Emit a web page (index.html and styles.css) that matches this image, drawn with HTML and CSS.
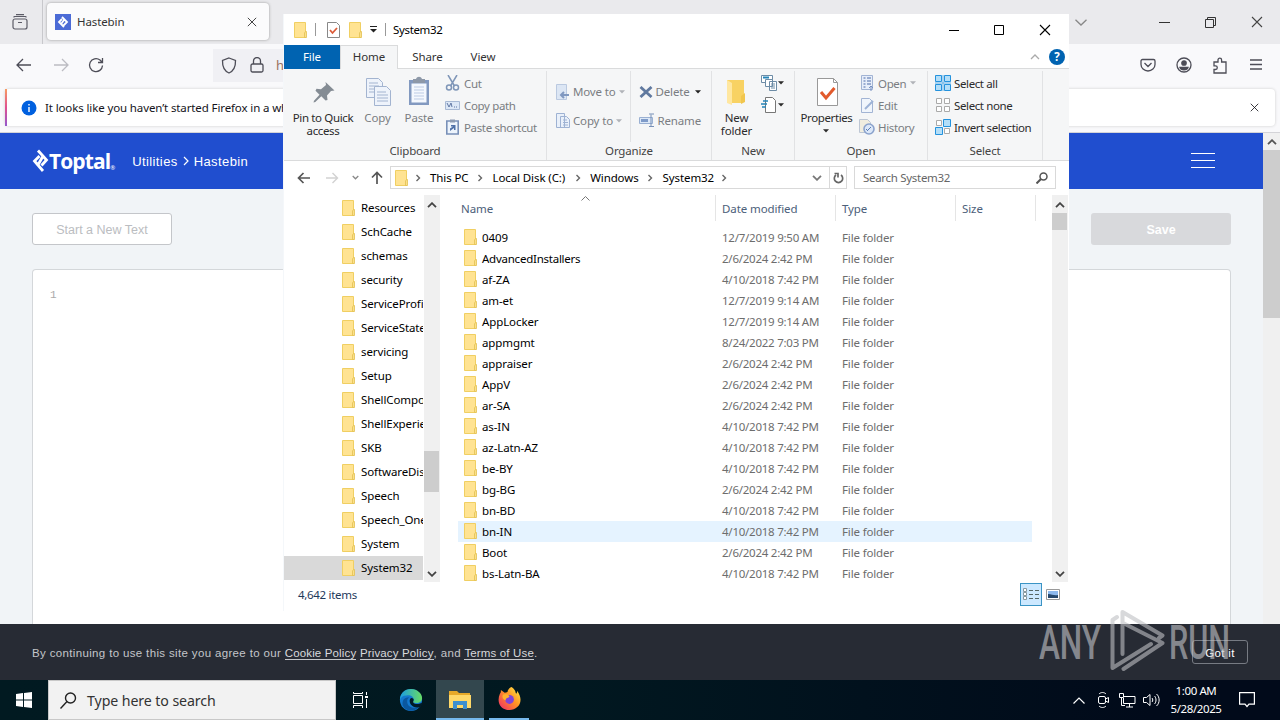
FILE: index.html
```html
<!DOCTYPE html>
<html lang="en">
<head>
<meta charset="utf-8">
<title>Desktop</title>
<link rel="stylesheet" href="styles.css">
</head>
<body>
<svg class="defs" width="0" height="0">
  <symbol id="folder" viewBox="0 0 13 16"><path d="M.5.5h11v15H.5z" fill="#ffe392" stroke="#f0cf62"/><path d="M10.500 15.500V11l1-1.500h1v6z" fill="#fbe08a" stroke="#e2c052" stroke-width=".8"/></symbol>
  <symbol id="x" viewBox="0 0 12 12"><path d="M1 1l10 10M11 1L1 11" fill="none" stroke="currentColor" stroke-width="1.100"/></symbol>
  <symbol id="up" viewBox="0 0 10 6"><path d="M1 5.200l4-4 4 4" fill="none" stroke="currentColor" stroke-width="1.800"/></symbol>
  <symbol id="down" viewBox="0 0 10 6"><path d="M1 .8l4 4 4-4" fill="none" stroke="currentColor" stroke-width="1.800"/></symbol>
  <symbol id="right" viewBox="0 0 6 8"><path d="M1.500 1l3 3-3 3" fill="none" stroke="#666" stroke-width="1.400"/></symbol>
  <symbol id="tri" viewBox="0 0 6 4"><path d="M0 .3h6L3 3.500z" fill="currentColor"/></symbol>
</svg>
<div class="screen">
  <div class="browser">
    <div class="tabbar">
      <div class="view"><svg width="16" height="16" viewBox="0 0 16 16" fill="none" stroke="#5b5b66" stroke-width="1.200"><rect x="1" y="5" width="14" height="10" rx="2"/><path d="M1.500 3.300l1-.8h11l1 .8M4 .7h8M6 8.500h4"/></svg></div>
      <div class="tab">
        <svg width="16" height="16" viewBox="0 0 16 16"><path d="M0 0h16v16H0z" fill="#4b6bd6"/><path d="M7 3l5 5-4 4M9 13L4 8l3-3M9 6L6.500 9.500" fill="none" stroke="#fff" stroke-width="1.800"/></svg>
        <span class="tab-name">Hastebin</span>
        <svg class="tab-x" width="10" height="10"><use href="#x"/></svg>
      </div>
      <div class="browser-ctl">
        <svg width="12" height="7" viewBox="0 0 12 7" fill="none" stroke="#888" stroke-width="1.300"><path d="M.5.800L6 6l5.500-5.200"/></svg>
        <svg width="11" height="11"><path d="M0 5.500h11" stroke="#333"/></svg>
        <svg width="11" height="11" fill="none" stroke="#333"><path d="M.5 2.500h8v8h-8zM2.500 2.500v-2h8v8h-2"/></svg>
        <svg width="12" height="12"><use href="#x"/></svg>
      </div>
    </div>
    <div class="toolbar">
      <svg width="16" height="14" viewBox="0 0 16 14" fill="none" stroke="#4d4d57" stroke-width="1.300"><path d="M15 7H1.500M7 1L1 7l6 6"/></svg>
      <svg class="fwd" width="16" height="14" viewBox="0 0 16 14" fill="none" stroke="#bcbcc2" stroke-width="1.300"><path d="M1 7h13.500M9 1l6 6-6 6"/></svg>
      <svg class="reload" width="16" height="16" viewBox="0 0 16 16" fill="none" stroke="#4d4d57" stroke-width="1.300"><path d="M14.500 8.500A6.500 6.500 0 1 1 12 3l2 2M14.500 1v4.500H10"/></svg>
      <div class="url">
        <svg width="16" height="17" viewBox="0 0 16 17" fill="none" stroke="#4d4d57" stroke-width="1.300"><path d="M8 1l6.500 2.500c.2 6-2 10.500-6.500 12.500C3.500 14 1.300 9.500 1.500 3.500z"/></svg>
        <svg width="14" height="16" viewBox="0 0 14 16" fill="none" stroke="#4d4d57" stroke-width="1.300"><rect x="1" y="7" width="12" height="8" rx="1.500"/><path d="M3.500 7V4a3.500 3.500 0 0 1 7 0v3"/></svg>
        <span>h</span>
      </div>
      <div class="tools">
        <svg width="16" height="16" viewBox="0 0 16 16" fill="none" stroke="#4d4d57" stroke-width="1.300"><path d="M2.500 2.500h11a1.500 1.500 0 0 1 1.500 1.500v3.500a7 6.500 0 0 1-14 0V4a1.500 1.500 0 0 1 1.500-1.500zM4.500 6L8 9.500 11.500 6"/></svg>
        <svg width="16" height="16" viewBox="0 0 16 16" fill="none" stroke="#4d4d57" stroke-width="1.300"><circle cx="8" cy="8" r="7"/><circle cx="8" cy="6" r="2.200" fill="#4d4d57"/><path d="M4 10.500h8c-1 3-7 3-8 0z" fill="#4d4d57"/></svg>
        <svg width="16" height="17" viewBox="0 0 16 17" fill="none" stroke="#4d4d57" stroke-width="1.300"><path d="M2 5h4V3a1.800 1.800 0 0 1 3.600 0v2H14v11H2v-3.500h1.500a1.800 1.800 0 0 0 0-3.600H2z"/></svg>
        <svg width="12" height="12" stroke="#4d4d57" stroke-width="1.300"><path d="M0 1h12M0 5.500h12M0 10h12"/></svg>
      </div>
    </div>
    <div class="notice-wrap"><div class="notice">
      <svg width="16" height="16"><circle cx="8" cy="8" r="7.500" fill="#0060df"/><path d="M8 7v5M8 4v1.500" stroke="#fff" stroke-width="1.400"/></svg>
      <span>It looks like you haven’t started Firefox in a while.</span>
      <svg class="notice-x" width="9" height="9"><use href="#x"/></svg>
    </div></div>
    <div class="page-row">
      <div class="page">
        <div class="site-head">
          <svg width="17" height="24" viewBox="0 0 16 24" fill="none" stroke="#fff" stroke-width="2.800"><path d="M5.500 1.500L14 11l-5 5.500M10.500 22L2 12l5-5M10 8l-4 7"/></svg>
          <span class="brand">Toptal</span><span class="reg">®</span>
          <span class="crumb">Utilities</span>
          <svg class="crumb-sep" width="6" height="10" fill="none" stroke="#fff" stroke-width="1.200"><path d="M1 1l4 4-4 4"/></svg>
          <span class="crumb">Hastebin</span>
          <svg class="burger" width="24" height="16" stroke="#fff"><path d="M0 .5h24M0 7.500h24M0 14.500h24"/></svg>
        </div>
        <div class="actions"><span class="btn-new">Start a New Text</span><span class="btn-save">Save</span></div>
        <div class="editor">1</div>
      </div>
      <div class="scroll">
        <div class="scroll-btn"><svg width="10" height="6"><use href="#up"/></svg></div>
        <div class="scroll-thumb"></div>
      </div>
    </div>
    <div class="cookie">
      <span class="cookie-text">By continuing to use this site you agree to our <u>Cookie Policy</u> <u>Privacy Policy</u>, and <u>Terms of Use</u>.</span>
      <span class="got">Got it</span>
    </div>
  </div>

  <div class="explorer">
    <div class="titlebar">
      <svg width="13" height="16"><use href="#folder"/></svg><i class="bar"></i>
      <svg class="q2" width="13" height="16" viewBox="0 0 13 16"><path d="M.5.5h9l3 3v12H.5z" fill="#fff" stroke="#888"/><path d="M3 8l2.500 3 4.500-5" fill="none" stroke="#dc5b38" stroke-width="1.800"/></svg>
      <svg class="q3" width="13" height="16"><use href="#folder"/></svg>
      <svg class="q4" width="7" height="7"><path d="M0 .5h7" stroke="#222"/><path d="M0 3h7L3.500 6.500z" fill="#222"/></svg><i class="bar b2"></i>
      <span class="wtitle">System32</span>
      <div class="wctl">
        <svg width="10" height="10"><path d="M0 5.500h10" stroke="#000"/></svg>
        <svg width="10" height="10" fill="none" stroke="#000"><path d="M.5.5h9v9h-9z"/></svg>
        <svg width="12" height="12"><use href="#x"/></svg>
      </div>
    </div>
    <div class="tabs">
      <span class="t-file">File</span><span class="t-home">Home</span><span class="t-share">Share</span><span class="t-view">View</span>
      <svg class="collapse" width="10" height="6" fill="none" stroke="#aaa" stroke-width="1.300"><path d="M1 5l4-4 4 4"/></svg>
      <span class="help">?</span>
    </div>
    <div class="ribbon">
      <div class="grp g-clip"><div class="body">
        <div class="big pin"><svg width="30" height="34" viewBox="0 0 30 34"><path d="M17.500 7l9 8.500-3.500.5-4 4.500.5 4.500-2 .5-4.200-4.200-6 5.700-1.800.5.500-1.800 5.500-6-4-4 1-2 4.500.5 5-4.200z" fill="#848c94"/></svg><span>Pin to Quick<br>access</span></div>
        <div class="big copy dim"><svg width="30" height="34" viewBox="0 0 30 34" fill="#eef3fb" stroke="#a3b4d0"><path d="M3.500 3.500h12l4 4v15h-16z"/><path d="M6 8h9M6 11h10M6 14h8M6 17h8"/><path d="M11.500 11.500h12l4 4v15h-16z"/><path d="M14 17h9M14 20h11M14 23h11M14 26h11"/></svg><span>Copy</span></div>
        <div class="big paste dim"><svg width="30" height="34" viewBox="0 0 30 34"><path d="M5 5h20v25H5z" fill="#8299c0"/><path d="M7.500 8.500h15v19h-15z" fill="#f4f8fe"/><path d="M10 12h10M10 15h10M10 18h10M10 21h10M10 24h10" stroke="#bccbe4"/><path d="M9 4h3c1-3 5-3 6 0h3v4H9z" fill="#8d98a8"/></svg><span>Paste</span></div>
        <div class="small dim">
          <span class="cmd"><svg width="15" height="16" viewBox="0 0 15 16" fill="none" stroke="#7f96b8" stroke-width="1.500"><path d="M3 0l6.500 11M12 0L5.500 11"/><circle cx="4" cy="12.500" r="2.500"/><circle cx="11" cy="12.500" r="2.500"/></svg>Cut</span>
          <span class="cmd"><svg width="15" height="10"><path d="M.5 1.500h14v8H.5z" fill="#dce7f6" stroke="#a8b9d4"/><path d="M2 3l2 4 2-4 1 4M9 7h1M11 7h1" fill="none" stroke="#6077a4"/></svg>Copy path</span>
          <span class="cmd"><svg width="15" height="16" viewBox="0 0 15 16"><path d="M1.800 2h11.400v13H1.800z" fill="#edf4fc" stroke="#7890b8" stroke-width="1.600"/><path d="M5 .5h5v3H5z" fill="#8c9bb2"/><path d="M5 12V9.500L8 7.500H6V6h4.500v5H9V9z" fill="#4f71a8"/></svg>Paste shortcut</span>
        </div></div><div class="label">Clipboard</div></div>
      <div class="grp g-org"><div class="body">
        <div class="duo dim"><span class="cmd"><svg width="14" height="16"><path d="M.5.5h10v15H.5z" fill="#dce6f4" stroke="#bac9e0"/><path d="M13 11H5M8 8l-3 3 3 3" stroke="#8098c0" fill="none" stroke-width="2"/></svg>Move to<svg class="dt" width="6" height="4"><use href="#tri"/></svg></span>
        <span class="cmd"><svg width="14" height="16" fill="#e9f0fa" stroke="#9eb2d3"><path d="M.5.500h8v14h-8zM4.500 3.500h6l3 3v8h-9zM7 7h4M7 9.500h5M7 12h5"/></svg>Copy to<svg class="dt" width="6" height="4"><use href="#tri"/></svg></span></div>
        <div class="duo d2 dim"><span class="cmd"><svg width="14" height="12"><path d="M1.500 1l11 10M12.500 1l-11 10" stroke="#60799f" stroke-width="2.800"/></svg>Delete<svg class="dt dark" width="6" height="4"><use href="#tri"/></svg></span>
        <span class="cmd"><svg width="16" height="15"><path d="M.5 4.500h13v6H.5z" fill="#dce8f7" stroke="#9ab0d2"/><path d="M2 6h7v3H2z" fill="#7f9bc9"/><path d="M12 1.500V13M10 1h5M10 13.500h5" stroke="#7790b8"/></svg>Rename</span></div>
      </div><div class="label">Organize</div></div>
      <div class="grp g-new"><div class="body">
        <div class="big newf"><svg width="30" height="34" viewBox="0 0 30 34"><path d="M5 5h17v21l-3 2L5 28z" fill="#f8d263"/><path d="M5 5l5 3v22l-5-2z" fill="#ffe7a0"/><path d="M19 21l4-3v9l-4 2z" fill="#f1c64e"/></svg><span>New<br>folder</span></div>
        <div class="mini"><span><svg width="16" height="16" fill="#fff" stroke="#6d8ca6"><path d="M.5.5h11v7H.500z"/><path d="M2 2.500h6" stroke="#2484b8" stroke-width="2"/><path d="M4.500 4.500h7v7h-7zM8.500 6.500h7v9h-7zM10 9h4M10 11h4M10 13h4"/></svg><svg width="6" height="4"><use href="#tri"/></svg></span>
        <span><svg width="16" height="16"><path d="M4.500.5h7l3 3v12h-10z" fill="#fff" stroke="#777"/><path d="M0 7h6M2 4h5M1 10h4" stroke="#2484b8" stroke-width="1.300"/></svg><svg width="6" height="4"><use href="#tri"/></svg></span></div>
      </div><div class="label">New</div></div>
      <div class="grp g-open"><div class="body">
        <div class="big prop"><svg width="30" height="34" viewBox="0 0 30 34"><path d="M5.500 3.500h16l4 4v23h-20z" fill="#fff" stroke="#999"/><path d="M21.500 3.500v4h4" fill="none" stroke="#999"/><path d="M9 17l5 6 8.500-10" fill="none" stroke="#e25a2c" stroke-width="3"/></svg><span>Properties<br><svg width="6" height="4"><use href="#tri"/></svg></span></div>
        <div class="small dim">
          <span class="cmd"><svg width="13" height="16"><path d="M.5.5h11v14H.5z" fill="#e7eefa" stroke="#a2b4d4"/><path d="M2.500 3h2M6 3h4M2.500 6h2M6 6h4M2.500 9h2M6 9h4M2.500 12h2" stroke="#8198c4" stroke-width="1.400"/><path d="M10 16v-5M8 13l2-2 2 2" stroke="#7790c0" fill="none"/></svg>Open<svg class="dt" width="6" height="4"><use href="#tri"/></svg></span>
          <span class="cmd"><svg width="13" height="15"><path d="M.5.5h8l3 3v11H.5z" fill="#f0f5fc" stroke="#a2b4d4"/><path d="M4 11l8-8" stroke="#9db2d6" stroke-width="2"/></svg>Edit</span>
          <span class="cmd hist"><svg width="16" height="16"><path d="M.5.5h8l3 3v10H.5z" fill="#f0eddf" stroke="#bdc6d4"/><circle cx="10" cy="10" r="5" fill="#dbe7f8" stroke="#8ba3cd" stroke-width="1.600"/><path d="M9 11l3-3M7 10l2 2" stroke="#5c7eb5"/></svg>History</span>
        </div></div><div class="label">Open</div></div>
      <div class="grp g-sel"><div class="body"><div class="small">
        <span class="cmd"><svg width="16" height="16"><path d="M.5.5h6v6h-6zM9.500.5h6v6h-6zM.5 9.500h6v6h-6zM9.500 9.500h6v6h-6z" fill="#b3def8" stroke="#2492dd"/><path d="M8 0v16M0 8h16" stroke="#5fb0e8"/></svg>Select all</span>
        <span class="cmd"><svg width="16" height="16" fill="#fff" stroke="#aaa"><path d="M1.500 1.500h5v5h-5zM9.500 1.500h5v5h-5zM1.500 9.500h5v5h-5zM9.500 9.500h5v5h-5z"/></svg>Select none</span>
        <span class="cmd"><svg width="16" height="16"><path d="M1.500 1.500h5v5h-5zM9.500 9.500h5v5h-5z" fill="#fff" stroke="#aaa"/><path d="M8.500.5h7v7h-7zM.5 8.500h7v7h-7z" fill="#b3def8" stroke="#2492dd"/></svg>Invert selection</span>
      </div></div><div class="label">Select</div></div>
    </div>
    <div class="address">
      <svg width="13" height="12" viewBox="0 0 13 12" fill="none" stroke="#555" stroke-width="1.700"><path d="M13 6H1.500M6.500 1l-5 5 5 5"/></svg>
      <svg class="a2" width="13" height="12" viewBox="0 0 13 12" fill="none" stroke="#d2d2d2" stroke-width="1.400"><path d="M0 6h11.500M6.500 1l5 5-5 5"/></svg>
      <svg class="a3 grey" width="7" height="5"><use href="#down"/></svg>
      <svg class="a4" width="12" height="13" viewBox="0 0 12 13" fill="none" stroke="#555" stroke-width="1.700"><path d="M6 13V2M1 6.500l5-5 5 5"/></svg>
      <div class="path">
        <svg width="13" height="16"><use href="#folder"/></svg>
        <svg class="s1" width="6" height="8"><use href="#right"/></svg><span class="p1">This PC</span>
        <svg width="6" height="8"><use href="#right"/></svg><span class="p2">Local Disk (C:)</span>
        <svg width="6" height="8"><use href="#right"/></svg><span class="p3">Windows</span>
        <svg width="6" height="8"><use href="#right"/></svg><span class="p4">System32</span>
        <svg width="6" height="8"><use href="#right"/></svg>
        <svg class="pd" width="10" height="6"><use href="#down"/></svg>
        <div class="refresh"><svg width="11" height="12" viewBox="0 0 11 12" fill="none" stroke="#666" stroke-width="1.700"><path d="M8 3a4.200 4.200 0 1 1-5 0M1.500 1.500h3.500v4"/></svg></div>
      </div>
      <div class="find"><span>Search System32</span><svg width="12" height="12" fill="none" stroke="#555" stroke-width="1.500"><circle cx="7.500" cy="4.500" r="3.500"/><path d="M5 7L.5 11.500" stroke-width="2"/></svg></div>
    </div>
    <div class="content">
      <div class="tree">
        <div><svg><use href="#folder"/></svg>Resources</div><div><svg><use href="#folder"/></svg>SchCache</div><div><svg><use href="#folder"/></svg>schemas</div><div><svg><use href="#folder"/></svg>security</div><div><svg><use href="#folder"/></svg>ServiceProfiles</div><div><svg><use href="#folder"/></svg>ServiceState</div><div><svg><use href="#folder"/></svg>servicing</div><div><svg><use href="#folder"/></svg>Setup</div><div><svg><use href="#folder"/></svg>ShellComponents</div><div><svg><use href="#folder"/></svg>ShellExperiences</div><div><svg><use href="#folder"/></svg>SKB</div><div><svg><use href="#folder"/></svg>SoftwareDistribution</div><div><svg><use href="#folder"/></svg>Speech</div><div><svg><use href="#folder"/></svg>Speech_OneCore</div><div><svg><use href="#folder"/></svg>System</div><div class="sel"><svg><use href="#folder"/></svg>System32</div>
      </div>
      <div class="sb sb-tree"><svg width="10" height="6"><use href="#up"/></svg><div class="thumb"></div><svg class="end" width="10" height="6"><use href="#down"/></svg></div>
      <div class="files">
        <div class="cols"><span>Name<svg class="sort" width="9" height="5" fill="none" stroke="#777"><path d="M.5 4.500l4-4 4 4"/></svg></span><span>Date modified</span><span>Type</span><span>Size</span></div>
        <div class="row"><b><svg><use href="#folder"/></svg>0409</b><span>12/7/2019 9:50 AM</span><span>File folder</span></div>
        <div class="row"><b><svg><use href="#folder"/></svg>AdvancedInstallers</b><span>2/6/2024 2:42 PM</span><span>File folder</span></div>
        <div class="row"><b><svg><use href="#folder"/></svg>af-ZA</b><span>4/10/2018 7:42 PM</span><span>File folder</span></div>
        <div class="row"><b><svg><use href="#folder"/></svg>am-et</b><span>12/7/2019 9:14 AM</span><span>File folder</span></div>
        <div class="row"><b><svg><use href="#folder"/></svg>AppLocker</b><span>12/7/2019 9:14 AM</span><span>File folder</span></div>
        <div class="row"><b><svg><use href="#folder"/></svg>appmgmt</b><span>8/24/2022 7:03 PM</span><span>File folder</span></div>
        <div class="row"><b><svg><use href="#folder"/></svg>appraiser</b><span>2/6/2024 2:42 PM</span><span>File folder</span></div>
        <div class="row"><b><svg><use href="#folder"/></svg>AppV</b><span>2/6/2024 2:42 PM</span><span>File folder</span></div>
        <div class="row"><b><svg><use href="#folder"/></svg>ar-SA</b><span>2/6/2024 2:42 PM</span><span>File folder</span></div>
        <div class="row"><b><svg><use href="#folder"/></svg>as-IN</b><span>4/10/2018 7:42 PM</span><span>File folder</span></div>
        <div class="row"><b><svg><use href="#folder"/></svg>az-Latn-AZ</b><span>4/10/2018 7:42 PM</span><span>File folder</span></div>
        <div class="row"><b><svg><use href="#folder"/></svg>be-BY</b><span>4/10/2018 7:42 PM</span><span>File folder</span></div>
        <div class="row"><b><svg><use href="#folder"/></svg>bg-BG</b><span>2/6/2024 2:42 PM</span><span>File folder</span></div>
        <div class="row"><b><svg><use href="#folder"/></svg>bn-BD</b><span>4/10/2018 7:42 PM</span><span>File folder</span></div>
        <div class="row hover"><b><svg><use href="#folder"/></svg>bn-IN</b><span>4/10/2018 7:42 PM</span><span>File folder</span></div>
        <div class="row"><b><svg><use href="#folder"/></svg>Boot</b><span>2/6/2024 2:42 PM</span><span>File folder</span></div>
        <div class="row"><b><svg><use href="#folder"/></svg>bs-Latn-BA</b><span>4/10/2018 7:42 PM</span><span>File folder</span></div>
      </div>
      <div class="sb sb-files"><svg width="10" height="6"><use href="#up"/></svg><div class="thumb"></div><svg class="end" width="10" height="6"><use href="#down"/></svg></div>
    </div>
    <div class="status"><span>4,642 items</span>
      <div class="mode on"><svg width="16" height="13" fill="none"><path d="M.5.500h3v3h-3zM.5 4.500h3v3h-3zM.5 8.500h3v3h-3z" fill="#fff" stroke="#8899a0"/><path d="M6 2.500h4M12 2.500h4M6 6.500h4M12 6.500h4M6 10.500h4M12 10.500h4" stroke="#566"/></svg></div>
      <div class="mode"><svg width="14" height="11"><path d="M.5.500h13v10H.5z" fill="#fff" stroke="#999"/><path d="M2 2h10v7H2z" fill="#8cb8ed"/><path d="M2 5c4 0 6 2 10 1v3H2z" fill="#25476c"/></svg></div>
    </div>
  </div>

  <svg class="mark" width="196" height="66" viewBox="0 0 196 66" opacity=".6">
    <g fill="#c4c5c8" font-family="Roboto, sans-serif" font-size="49" font-weight="500"><text x="3" y="51" textLength="62" lengthAdjust="spacingAndGlyphs">ANY</text><text x="133" y="51" textLength="61" lengthAdjust="spacingAndGlyphs">RUN</text></g>
    <path d="M81 9l-4.500 3v48L115 36M86.500 46V4l40 23.500-3.500 2.500M87 15l39.500 20-39 26" fill="none" stroke="#bfc0c4" stroke-width="4" stroke-linejoin="round" stroke-linecap="round"/>
  </svg>

  <div class="taskbar">
    <div class="start"><svg width="16" height="16" fill="#fff"><path d="M0 2l7-1v6.500H0zM8 .9L16 0v7.500H8zM0 8.500h7V15l-7-1zM8 8.500h8V16l-8-1z"/></svg></div>
    <div class="tsearch"><svg width="17" height="17" fill="none" stroke="#222" stroke-width="1.400"><circle cx="10.500" cy="6" r="5"/><path d="M7 9.500L.5 16.500"/></svg><span>Type here to search</span></div>
    <div class="app"><svg width="17" height="16" fill="none" stroke="#fff"><path d="M1.500 3.500h9v8h-9zM1.500 0v1.500h9V0M1.500 16v-2.500h9V16M14.500 0v3M14.500 7v9"/><path d="M13 4h3v2h-3z" fill="#fff" stroke="none"/></svg></div>
    <div class="app edge"><svg width="24" height="24" viewBox="0 0 26 26"><defs><linearGradient id="eg" x1="0" x2="1"><stop offset="0" stop-color="#1b9de2"/><stop offset="1" stop-color="#68dc64"/></linearGradient></defs><circle cx="13" cy="13" r="12" fill="#1479cf"/><path d="M1 13C1 6 6 1 13 1s12 5 12 10c0 4-4 6-8 5-3 0-2-2-1-3 0-4-4-6-8-5-4 0-6 2-7 5z" fill="url(#eg)"/><path d="M9 13c-1 6 4 10 12 8-5 5-14 5-17-2-1-6 2-9 7-9-1 1-2 2-2 3z" fill="#0b579f"/><path d="M12 12c1-2 4-1 4 1-1 2-1 3 1 4 3 1 5 0 8-1l-1 4-3 1c-6 1-11-4-9-9z" fill="#021a27"/></svg></div>
    <div class="app active"><svg width="22" height="19"><path d="M0 1h8l2 2h11v15H0z" fill="#e7a929"/><path d="M0 5h22v13H0z" fill="#ffd869"/><path d="M4 11h14v8h-4v-4H8v4H4z" fill="#3e8fcf"/></svg></div>
    <div class="app ff"><svg width="23" height="24" viewBox="0 0 24 25"><defs><linearGradient id="fg" x1="1" y1="0" x2="0" y2="1"><stop offset="0" stop-color="#fff04a"/><stop offset=".45" stop-color="#ff9524"/><stop offset="1" stop-color="#f0246c"/></linearGradient></defs><path d="M14 0c5 3 4 6 5 7 1-1 1-2 1-3 8 11 1 20-8 20S-2 16 2 7c1-1 1-2 1-4l4 3c2 0 3-1 3-1 0-2 2-4 4-5z" fill="url(#fg)"/><circle cx="12" cy="13" r="4.600" fill="#8044d8"/><path d="M5 8c4-2 6 0 7 2-1 2-4 1-4 4-3-1-4-3-3-6z" fill="#ffb22e"/></svg></div>
    <div class="tray">
      <svg width="12" height="7" fill="none" stroke="#fff" stroke-width="1.200"><path d="M.5 6.500L6 1l5.500 5.500"/></svg>
      <svg class="t2" width="12" height="16" fill="none" stroke="#fff"><rect x=".5" y="4.500" width="7" height="7" rx="1.500"/><path d="M7.500 7l3-1.500v5L7.500 9M1 2c2-2 5-2 7 0M1 14c2 2 5 2 7 0"/></svg>
      <svg class="t3" width="17" height="15" fill="none" stroke="#fff"><path d="M5 3.500h11v7H4.500V5M.5.500h4v4h-4zM2.500 5v7.500H6M10.500 11v3M7 14h7"/></svg>
      <svg class="t4" width="17" height="14" fill="none" stroke="#fff"><path d="M.5 4.500h3L7 1.500v11L3.500 9.500h-3zM9 5c1 1 1 3 0 4M11.500 3c2 2 2 6 0 8M13.500 1c3.500 3 3.500 9 0 12"/></svg>
      <div class="clock"><div>1:00 AM</div><div>5/28/2025</div></div>
      <svg class="t5" width="16" height="16" fill="none" stroke="#fff" stroke-width="1.200"><path d="M.6.600h14.800v11.500H10L8 14.500l-2-2.400H.6z"/></svg>
    </div>
  </div>
</div>
</body>
</html>
```
FILE: styles.css
```css
* { box-sizing: border-box; }
body { margin: 0; overflow: hidden; }
svg { display: block; flex: none; }
.defs { position: absolute; }
.screen { position: relative; width: 1280px; height: 720px; overflow: hidden; display: flex; flex-direction: column; font-family: "Noto Sans", sans-serif; font-size: 11.5px; letter-spacing: -.1px; color: #000; white-space: nowrap; }
.grey { color: #888; }

.browser { height: 680px; display: flex; flex-direction: column; background: #f9f9fb; }
.tabbar { height: 44px; background: #eaeaed; display: flex; }
.view { width: 43px; border-right: 1px solid #c8c8cc; padding: 14px 0 0 12px; }
.tab { width: 222px; height: 37px; margin: 3px 0 0 4px; background: #fbfbfc; border-radius: 4px; box-shadow: 0 0 3px #999; display: flex; align-items: center; padding: 0 12px 0 8px; color: #333; }
.tab-name { margin-left: 6px; }
.tab-x { margin-left: auto; }
.browser-ctl { margin-left: auto; width: 204px; padding-right: 17px; display: flex; align-items: center; justify-content: flex-end; gap: 35px; color: #444; }
.browser-ctl svg:first-child { margin-right: 37px; }
.toolbar { height: 42px; display: flex; align-items: center; padding-left: 16px; }
.fwd { margin-left: 21px; }
.reload { margin-left: 19px; }
.url { width: 300px; height: 33px; margin-left: 109px; background: #f0f0f4; display: flex; align-items: center; padding-left: 8px; gap: 13px; color: #9a7060; font-size: 13px; }
.url span { margin-left: -1px; }
.tools { margin-left: auto; display: flex; align-items: center; gap: 20px; padding-right: 18px; }
.tools svg:last-child { margin-left: 2px; }
.notice-wrap { height: 47px; padding: 3px 5px 6px; border-bottom: 1px solid #d4d4d8; }
.notice { height: 37px; background: #fff; border-radius: 4px; box-shadow: 0 0 3px #ccc; display: flex; align-items: center; padding-left: 14px; border-left: 2px solid; border-image: linear-gradient(#f8a060, #e05090, #9059d0) 1; color: #15141a; }
.notice span { margin-left: 8px; letter-spacing: -.12px; }
.notice-x { margin-left: auto; margin-right: 16px; }
.page-row { flex: 1; display: flex; min-height: 0; }
.page { flex: 1; background: #f1f4f7; display: flex; flex-direction: column; overflow: hidden; }
.site-head { height: 56px; flex: none; background: #204ecf; display: flex; align-items: center; padding: 0 48px 0 32px; color: #fff; }
.brand { font: 700 21px "Open Sans", sans-serif; letter-spacing: -.9px; }
.reg { font-size: 6px; align-self: flex-end; margin-bottom: 17px; }
.crumb { font: 13px "Liberation Sans", sans-serif; letter-spacing: .4px; }
.reg + .crumb { margin-left: 17px; }
.crumb-sep { margin: 0 5px 0 5px; }
.burger { margin-left: auto; }
.actions { display: flex; justify-content: space-between; padding: 24px 32px; font: 12.500px "Liberation Sans", sans-serif; letter-spacing: 0; }
.actions span { width: 140px; height: 32px; border-radius: 3px; display: grid; place-items: center; padding-top: 1px; }
.btn-new { background: #fff; border: 1px solid #c4c6ca; color: #bbbdc1; }
.btn-save { background: #d8d9dc; color: #fff; font-weight: 700; }
.editor { flex: 1; margin: 0 32px; background: #fff; border: 1px solid #d4d7da; border-bottom: 0; border-radius: 4px 4px 0 0; padding: 19px 17px; font: 11px "Liberation Mono", monospace; color: #aaa; }
.scroll { width: 17px; background: #f0f0f0; }
.scroll-btn { height: 17px; display: grid; place-items: center; color: #555; }
.scroll-thumb { height: 168px; background: #cdcdcd; }
.cookie { height: 56px; background: #272b34; color: #c4c6ca; display: flex; align-items: center; justify-content: space-between; padding: 2px 32px 0; font: 11.500px "Liberation Sans", sans-serif; letter-spacing: .35px; }
.cookie u { text-decoration: none; border-bottom: 1px solid #c4c6ca; color: #d8d9dc; letter-spacing: .15px; }
.got { width: 56px; height: 24px; margin-top: -2px; border: 1px solid #777b83; border-radius: 3px; display: grid; place-items: center; color: #fff; padding-top: 1px; }

.explorer { position: absolute; left: 283px; top: 14px; width: 786px; height: 597px; background: #fff; border-left: 1px solid #f4f7fa; display: flex; flex-direction: column; }
.titlebar { height: 31px; flex: none; display: flex; align-items: center; padding-left: 10px; }
.bar { width: 1px; height: 13px; background: #999; margin-left: 8px; }
.q2 { margin-left: 11px; }
.q3 { margin-left: 9px; }
.q4 { margin-left: 8px; }
.wtitle { margin-left: 7px; letter-spacing: -.35px; }
.wctl { margin-left: auto; display: flex; gap: 35px; padding-right: 18px; align-items: center; }
.tabs { height: 24px; flex: none; display: flex; align-items: center; border-bottom: 1px solid #dadbdc; color: #333; }
.tabs > span { text-align: center; }
.tabs .t-file { width: 56px; height: 24px; line-height: 24px; background: #0063b1; color: #fff; }
.t-home { width: 58px; height: 24px; line-height: 22px; background: #f5f6f7; border: 1px solid #dadbdc; border-bottom: 0; margin-bottom: -1px; }
.t-share { width: 59px; }
.t-view { width: 52px; }
.collapse { margin-left: auto; margin-right: 9px; }
.tabs .help { width: 16px; height: 16px; border-radius: 50%; background: #0063b1; color: #fff; font-weight: 700; line-height: 16px; margin-right: 4px; }
.ribbon { height: 92px; flex: none; background: #f5f6f7; border-bottom: 1px solid #dadbdc; display: flex; color: #2b2b2b; letter-spacing: -.15px; }
.grp { display: flex; flex-direction: column; border-right: 1px solid #e1e2e4; margin: 2px 0 0; }
.body { flex: 1; display: flex; }
.label { text-align: center; height: 18px; line-height: 18px; color: #444; }
.g-clip { width: 263px; }
.g-org { width: 165px; }
.g-new { width: 83px; }
.g-open { width: 133px; }
.g-sel { width: 115px; }
.dim { color: #7a7d82; }
.big { display: flex; flex-direction: column; align-items: center; text-align: center; padding-top: 4px; line-height: 13px; }
.big svg { margin: 0 auto; }
.big > span { margin-top: 2px; }
.pin { width: 78px; letter-spacing: -.35px; }
.copy { width: 31px; }
.paste { width: 52px; }
.small { display: flex; flex-direction: column; padding-top: 1px; letter-spacing: -.35px; }
.cmd { height: 22px; display: flex; align-items: center; gap: 4px; }
.dt { color: #b0b3b8; }
.dark { color: #222; margin-left: 2px; }
.duo { display: flex; flex-direction: column; padding: 6px 0 0 9px; width: 85px; }
.duo .cmd { height: 29px; gap: 3px; }
.d2 { border-left: 1px solid #e1e2e4; padding-left: 8px; margin-left: 1px; }
.newf { width: 49px; }
.mini { padding-top: 1px; }
.mini span { display: flex; gap: 1px; align-items: center; height: 22px; }
.prop { width: 63px; letter-spacing: -.4px; }
.prop span svg { margin-top: 5px; }
.g-open .small { padding-left: 3px; }
.g-open .hist { margin-left: -2px; gap: 3px; }
.g-sel .small { padding-left: 7px; letter-spacing: -.38px; }
.g-sel .cmd { gap: 3px; }
.address { height: 34px; flex: none; display: flex; align-items: center; padding: 0 0 1px 13px; }
.a2 { margin-left: 16px; }
.a3 { margin-left: 13px; }
.a4 { margin-left: 12px; }
.path { width: 457px; height: 23px; margin-left: 7px; border: 1px solid #d9d9d9; display: flex; align-items: center; padding-left: 4px; }
.s1 { margin-left: 7px; }
.p1 { margin: 0 8px 0 9px; }
.p2 { margin: 0 10px 0 10px; }
.p3 { margin: 0 8px 0 9px; }
.p4 { margin: 0 7px 0 10px; }
.pd { margin-left: auto; margin-right: 7px; color: #777; }
.refresh { width: 17px; height: 100%; border-left: 1px solid #d9d9d9; display: grid; place-items: center; }
.find { width: 202px; height: 23px; margin-left: 7px; border: 1px solid #d9d9d9; display: flex; align-items: center; justify-content: space-between; padding: 0 7px 0 8px; color: #666; letter-spacing: -.3px; }
.content { height: 387px; flex: none; display: flex; overflow: hidden; }
.tree { width: 140px; overflow: hidden; }
.tree div { height: 24px; width: 139px; overflow: hidden; display: flex; align-items: center; padding: 0 0 1px 58px; gap: 6px; }
.tree div:first-child { height: 25px; padding-bottom: 0; }
.tree svg, .row svg { width: 13px; height: 16px; }
.tree .sel { background: #d9d9d9; }
.sb { width: 16px; height: 387px; background: #f0f0f0; display: flex; flex-direction: column; align-items: center; padding: 7px 1px 5px 0; color: #444; }
.sb .end { margin-top: auto; }
.thumb { width: 15px; background: #cdcdcd; }
.sb-tree .thumb { height: 41px; margin-top: 243px; }
.sb-files .thumb { height: 17px; margin-top: 5px; }
.files { width: 612px; padding-left: 18px; }
.cols, .row { display: grid; grid-template-columns: 258px 120px 120px 80px; align-items: center; }
.cols { height: 26px; color: #4c607a; margin-bottom: 6px; }
.cols span { position: relative; height: 26px; line-height: 28px; border-right: 1px solid #e5e5e5; padding-left: 6px; }
.cols span:first-child { padding-left: 3px; }
.sort { position: absolute; left: 123px; top: 1px; }
.row { height: 21px; width: 574px; color: #6d6d6d; }
.row b { font-weight: 400; color: #000; display: flex; align-items: center; gap: 5px; padding-left: 6px; }
.row svg { margin-top: -1px; }
.row span { padding-left: 6px; letter-spacing: -.24px; }
.row span:last-child { letter-spacing: -.15px; }
.row:nth-child(3) b { letter-spacing: -.24px; }
.row.hover { background: #e5f3ff; }
.status { flex: 1; display: flex; color: #1e395b; padding-left: 14px; }
.status span { margin: 5px auto 0 0; letter-spacing: -.3px; }
.mode { width: 22px; height: 23px; margin-top: 1px; display: grid; place-items: center; }
.mode:last-child { margin-right: 5px; }
.mode.on { background: #cce8ff; border: 1px solid #3a94c5; }

.mark { position: absolute; left: 1036px; top: 608px; }

.taskbar { height: 40px; background: linear-gradient(90deg, #011a21, #011820 45%, #010a1a 90%); display: flex; color: #fff; }
.start { width: 48px; display: grid; place-items: center; }
.tsearch { width: 288px; background: #f2f2f2; border: 1px solid #c8c8c8; display: flex; align-items: center; padding-left: 11px; gap: 10px; color: #333; font-size: 14.200px; }
.app { width: 48px; display: grid; place-items: center; }
.edge { width: 52px; padding-left: 2px; }
.active { background: #33474e; border-bottom: 2px solid #76b9ed; }
.ff { width: 40px; margin-left: 5px; border-bottom: 2px solid #76b9ed; }
.tray { margin-left: auto; display: flex; align-items: center; padding-right: 25px; }
.t2 { margin-left: 13px; }
.t3 { margin-left: 9px; }
.t4 { margin-left: 7px; }
.clock { width: 70px; text-align: center; line-height: 18px; letter-spacing: -.4px; margin-left: 1px; }
.t5 { margin-left: 8px; }
```
